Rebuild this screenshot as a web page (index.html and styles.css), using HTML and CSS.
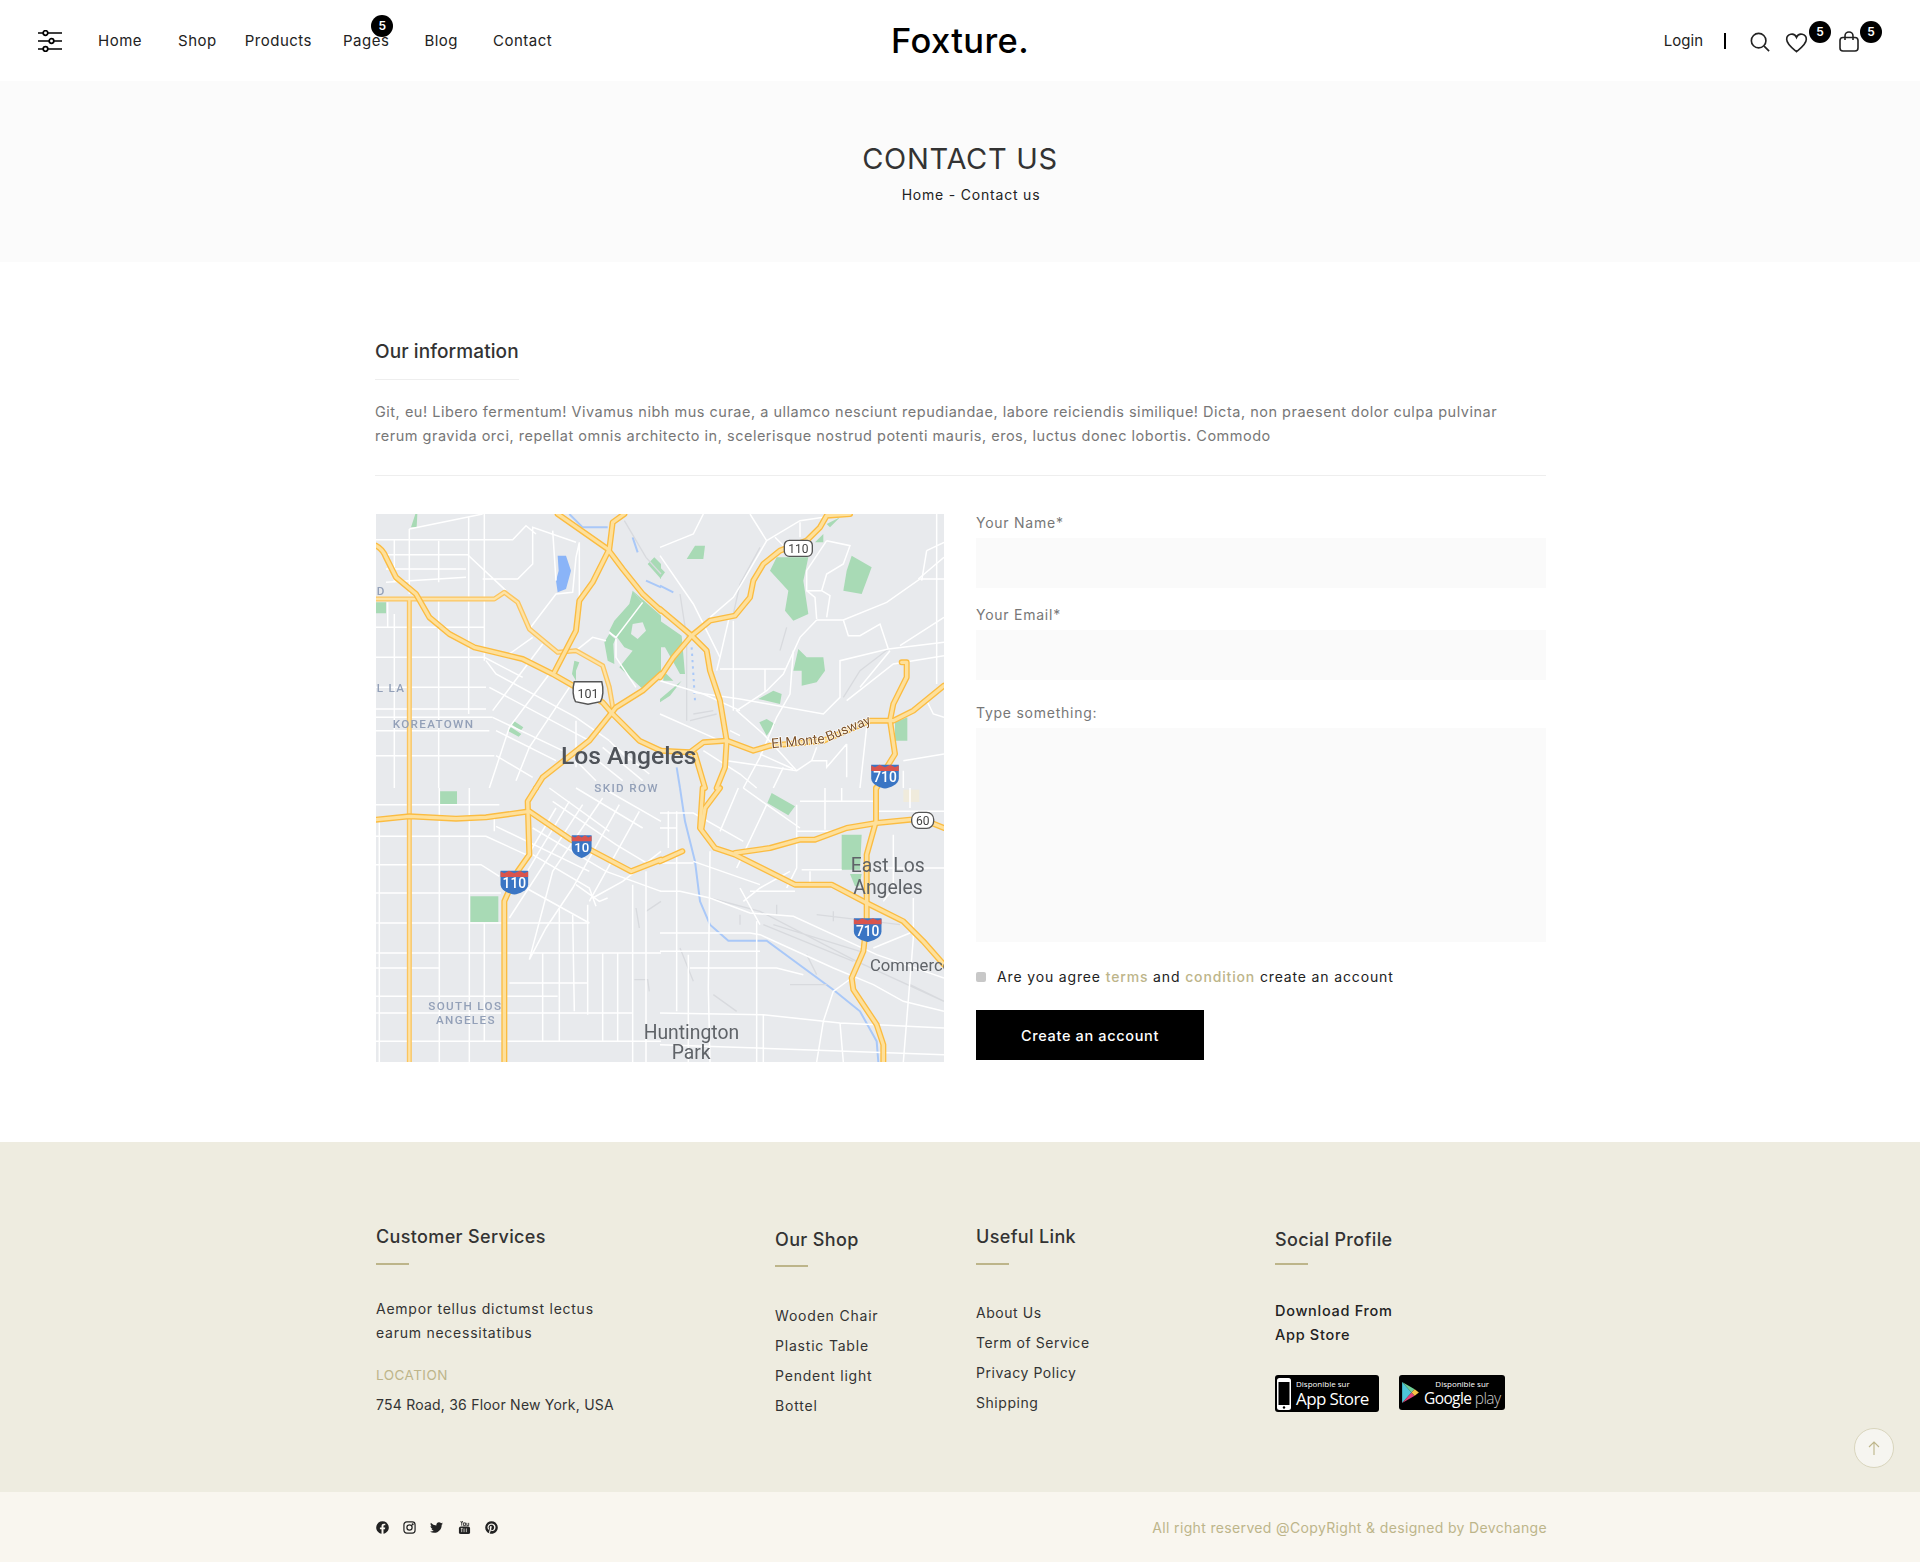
FILE: index.html
```html
<!DOCTYPE html>
<html lang="en">
<head>
    <meta charset="UTF-8">
    <meta name="viewport" content="width=device-width, initial-scale=1.0">
    <title>Foxture - Contact us</title>
    <link rel="stylesheet" href="styles.css">
</head>
<body>
    <header class="site-header">
        <div class="header-left">
            <svg class="menu-icon" viewBox="0 0 24 22" width="24" height="22" fill="none" stroke="#000" stroke-width="1.7">
                <path d="M0 3h5M10 3h14M0 11h11M16 11h8M0 19h5M10 19h14"/>
                <circle cx="7.5" cy="3" r="2.3"/><circle cx="13.5" cy="11" r="2.3"/><circle cx="7.5" cy="19" r="2.3"/>
            </svg>
            <nav class="main-nav">
                <a href="#" class="nav-home">Home</a>
                <a href="#" class="nav-shop">Shop</a>
                <a href="#" class="nav-products">Products</a>
                <a href="#" class="nav-pages">Pages<span class="badge">5</span></a>
                <a href="#" class="nav-blog">Blog</a>
                <a href="#" class="nav-contact">Contact</a>
            </nav>
        </div>
        <div class="logo">Foxture.</div>
        <div class="header-right">
            <a href="#" class="login">Login</a>
            <span class="divider"></span>
            <svg class="icon-search" viewBox="0 0 22 22" width="20" height="20" fill="none" stroke="#222" stroke-width="1.8">
                <circle cx="9.5" cy="9.5" r="8"/><path d="M15.5 15.5L21 21"/>
            </svg>
            <span class="icon-wrap icon-heart">
                <svg viewBox="0 0 24 22" width="23" height="20" fill="none" stroke="#222" stroke-width="1.8">
                    <path d="M12 20.5C7 16.5 1.2 12.5 1.2 7A5.6 5.6 0 0 1 12 4.8 5.6 5.6 0 0 1 22.8 7c0 5.5-5.8 9.5-10.8 13.5z"/>
                </svg>
                <span class="badge">5</span>
            </span>
            <span class="icon-wrap icon-bag">
                <svg viewBox="0 0 20 21" width="20" height="21" fill="none" stroke="#222" stroke-width="1.6">
                    <rect x="1" y="6.5" width="18" height="13.5" rx="3"/><path d="M6 9V5a4 4 0 0 1 8 0v4"/>
                </svg>
                <span class="badge">5</span>
            </span>
        </div>
    </header>

    <section class="page-title">
        <h1>CONTACT US</h1>
        <div class="crumbs">Home - Contact us</div>
    </section>

    <main class="contact">
        <h2 class="info-title">Our information</h2>
        <p class="info-text">Git, eu! Libero fermentum! Vivamus nibh mus curae, a ullamco nesciunt repudiandae, labore reiciendis similique! Dicta, non praesent dolor culpa pulvinar<br>rerum gravida orci, repellat omnis architecto in, scelerisque nostrud potenti mauris, eros, luctus donec lobortis. Commodo</p>
        <div class="contact-grid">
            <svg class="map" viewBox="0 0 1704 1644">
                <defs>
                    <g id="freeways" fill="none" stroke-linejoin="round" stroke-linecap="round">
                        <!-- north west -->
                        <path d="M0 95Q20 105 30 130L60 190L120 240L160 310L220 360L295 400L440 435L530 480L600 520L680 565L710 600L790 680L855 710"/>
                        <path d="M545 0L695 105L740 165L800 240L855 290"/>
                        <path d="M745 0L710 25L700 105L650 205L610 260L600 350L535 475"/>
                        <path d="M855 480L800 530L720 580L640 680L500 790L480 822"/>
                        <g transform="translate(852 0)">
                            <path d="M0 285L95 365L140 410L150 470L180 560L200 680L195 760L170 822"/>
                            <path d="M570 0L500 5L480 40L440 80L360 110L310 150L280 200L270 250L225 305L150 320L95 365L40 430L0 490"/>
                            <path d="M0 710L90 715L130 685L200 680L280 710L330 695L490 680L630 620H700L760 590L852 515"/>
                            <path d="M105 720L135 822"/>
                            <path d="M725 445L740 445L740 490L700 570L690 620L705 720L680 760L650 822"/>
                        </g>
                        <g transform="translate(0 822)">
                            <path d="M0 95L100 85L240 92L330 88L460 70L585 155L765 250L855 215"/>
                            <path d="M480 0L455 40L460 200L425 250L385 340V822"/>
                        </g>
                        <g transform="translate(852 822)">
                            <path d="M128 0L120 120L165 180L225 200L405 290H515L620 345L730 400L790 460L852 530"/>
                            <path d="M180 0L135 60L125 120"/>
                            <path d="M225 195L330 180L420 155H465L560 120L650 105L750 95H790L852 120"/>
                            <path d="M648 0V100L620 200V400L610 490L575 570L580 605L650 710L670 770V822"/>
                            <path d="M0 220L67 190"/>
                        </g>
                    </g>
                    <g id="surface" fill="none" stroke-linejoin="round">
                        <path d="M0 255H355L385 235L425 265L460 345L545 415L600 410L680 455L700 520L712 590"/>
                        <path d="M100 255V1644"/>
                    </g>
                    <path id="busway" d="M1187 703L1342 688L1492 626"/>
                </defs>
                <rect width="1704" height="1644" fill="#e8eaed"/>

                <!-- parks -->
                <g fill="#a8dab5">
                    <path d="M770 230L798 265L720 365L745 400L770 410L730 460L800 525L855 480V305z"/>
                    <path d="M770 230L760 270L715 320L700 350L718 370L798 265z"/>
                    <path d="M700 360L685 385L695 440L715 450L712 390L718 375z"/>
                    <path d="M595 440L610 445L600 470L600 500L588 480z"/>
                    <path d="M405 630L415 622L442 640L434 650zM395 650L405 640L436 660L428 668z"/>
                    <path d="M0 265H30V298H0zM105 40L118 0H124L122 40zM815 150L835 130L855 150V195z"/>
                    <g transform="translate(852 0)">
                        <path d="M330 170L350 130H445L430 200L445 300L400 320L375 290L385 230z"/>
                        <path d="M575 125L635 160L620 200L605 240L550 230L560 170z"/>
                        <path d="M400 470L415 405L440 430L490 430L495 470L470 505L425 515V470z"/>
                        <path d="M295 555L340 530L365 540L360 570zM298 625L320 615L345 630L320 665z"/>
                        <path d="M105 95H135L130 135H80zM705 625L742 610V680H705zM0 160L15 175L0 195z"/>
                        <path d="M0 320L65 365L75 480L60 480L15 400H0zM10 470L40 500H10zM0 555L65 500L30 545L0 565z"/>
                        <path d="M500 30L540 10L510 40zM465 85L490 60V85z"/>
                    </g>
                    <g transform="translate(0 822)">
                        <path d="M190 10H243V48H190zM283 325H367V402H283z"/>
                    </g>
                    <g transform="translate(852 822)">
                        <path d="M335 15L405 55L385 82L322 45zM545 140H605L600 245H545zM570 258H605L598 295H585z"/>
                    </g>
                </g>
                <path d="M770 330L800 325L810 350L785 375L765 360z" fill="#e8eaed"/>
                <path transform="translate(852 822)" d="M730 5H778V42H730z" fill="#f0ebdc"/>

                <!-- water -->
                <path d="M545 125L570 125L585 170L570 225L545 235L540 200L548 170z" fill="#8ab4f8"/>
                <g fill="none" stroke="#a9c8f8" stroke-width="6">
                    <path d="M580 0L620 40H695M770 70L785 115M810 200L855 220"/>
                    <path transform="translate(852 0)" d="M0 215L40 235"/>
                    <path transform="translate(852 0)" d="M95 400L105 560" stroke-dasharray="7 12"/>
                    <path transform="translate(852 0)" d="M50 760L60 822"/>
                    <path transform="translate(852 822)" d="M60 0L75 100L105 220L120 340L150 410L205 458H320L520 605L600 670L650 760L655 822"/>
                </g>

                <!-- gray rail lines -->
                <g fill="none" stroke="#d8dade" stroke-width="4">
                    <path d="M745 20L810 130L855 180M770 800L780 822"/>
                    <g transform="translate(852 0)">
                        <path d="M60 240L80 370V620M300 100L240 210L220 300M380 340L360 410M685 405L600 470L550 550M100 600L160 590M90 620L170 600"/>
                    </g>
                    <g transform="translate(0 822)">
                        <path d="M780 360L790 420M810 370L855 340M775 575H815L820 610"/>
                    </g>
                    <g transform="translate(852 822)">
                        <path d="M150 330L300 370L590 520L852 640M310 410L580 520M340 410L600 490M470 380L720 410M240 380V410M350 350V380M520 370V400M60 480L100 580M160 620L230 670M440 500L470 560M390 590H500M750 590L852 640"/>
                    </g>
                </g>

                <!-- streets -->
                <g fill="none" stroke="#fff" stroke-width="4.5">
                    <!-- north west -->
                    <path d="M100 45L320 0M0 77H410L450 35L480 60M30 122H275L390 230M30 165H270M30 205L270 190M320 195H425L470 150V40L600 85"/>
                    <path d="M0 340H325M0 430H325L440 490M0 520H330M0 585H330M0 610H350M0 650H340M0 725H355"/>
                    <path d="M55 75V205M100 45V240M188 80V205M188 260V822M278 10V600M325 0V440M35 265V340M55 300V822"/>
                    <path d="M330 440L360 480L600 610L700 680M340 520L640 680M350 610L560 710M360 650L540 740M360 725L470 790"/>
                    <path d="M470 370L400 420M500 390L350 590M520 480L400 640L340 822M580 520L460 700L420 800M460 345L540 240L590 235L600 130L610 85V260M530 50L540 200"/>
                    <path d="M690 380L650 370L600 410M800 265L720 370L700 355M720 375V430L780 520"/>
                    <path d="M600 620V760M700 680L760 740M640 720L740 800M680 700L800 800M720 700L820 780M600 740L660 800"/>
                    <!-- north east -->
                    <g transform="translate(852 0)">
                        <path d="M0 125L100 270L180 430M270 0L320 80L250 200L220 250L150 310M0 100L100 60L130 0M320 80L420 20L490 10M345 70L375 100M420 25V70"/>
                        <path d="M500 80L570 95L550 150L500 180L485 230L510 245L500 310M500 80L440 170V230L485 230M440 230L465 250L470 315"/>
                        <path d="M470 318H550L680 265L780 195H852M470 318L420 370L370 480L320 530L230 590L310 660L410 770"/>
                        <path d="M550 318L565 365H600L660 330L685 405L540 440V550L490 600L240 555L100 535M685 405L852 385M400 410L390 540L350 610L300 730L250 822"/>
                        <path d="M180 465H375M315 465V530M220 320V590M210 300L180 430L170 470M830 0V510M800 110L785 200M800 110L852 85"/>
                        <path d="M560 560L700 450L852 425M600 520L690 410M720 395L852 310M775 195L852 130M800 560L820 600L852 610M620 640L600 822"/>
                        <path d="M470 700L455 740H500V760L560 690M200 740L410 770L455 740M300 720L400 765M370 760L340 822M560 690V790M730 740L852 720M730 770V822"/>
                        <path d="M240 590L130 540L0 500M0 600L180 680M130 710L240 780L290 822M210 650L240 665"/>
                    </g>
                    <!-- south west -->
                    <g transform="translate(0 822)">
                        <path d="M0 50H370M0 145H330L450 200M0 230H315L370 265M0 315H375M0 405H640M0 495H855M0 540H190M0 625H545M0 675H770M0 760H855M400 585H635"/>
                        <path d="M10 90V822M190 0V822M280 0V822M325 405V760M355 90V130M500 495V760M550 360V760M590 380L595 670M635 350V680M680 495V760M725 495V760M770 290V822M810 250V822"/>
                        <path d="M360 115L640 250M470 120L690 250L855 310M470 200L640 300L660 355M450 300L640 405M600 290L670 340L695 330"/>
                        <path d="M540 60L410 280M580 40L430 290M620 50L400 390M680 30L530 250L460 515M730 50L590 300L510 420L460 515M790 70L640 340M855 190L740 280L650 330"/>
                        <path d="M520 0L700 130M600 0L800 120M680 0L855 100M530 40L720 170L820 230"/>
                    </g>
                    <!-- south east -->
                    <g transform="translate(852 822)">
                        <path d="M0 75H100L250 160M0 120H50M50 70V670M25 70V180M100 220L300 290M0 225H100M0 310H60L150 330L270 375L400 385L650 500L852 570"/>
                        <path d="M150 190L145 600L150 822M290 400V822M240 300L300 410M235 0L180 130M320 50L230 240M250 0L320 50L420 120M410 50V240L380 300"/>
                        <path d="M495 0V125M545 0V40M420 40H645M410 130H520M425 245H545M450 250V285M650 240H852M700 140V300L670 340M760 330V450L730 822"/>
                        <path d="M270 310H405M250 340L300 300L390 250M640 70H852M750 60V0M0 435H270L300 440L520 540L640 590L730 640L852 670M0 490H300M90 540H350L430 560M85 500V822"/>
                        <path d="M520 610L490 700L470 822M520 610L575 570M640 480L750 435M0 675L310 680L540 705L852 720M310 680V822M540 705L550 822M0 770L852 800"/>
                    </g>
                </g>

                <use href="#surface" stroke="#fbc55f" stroke-width="15"/>
                <use href="#surface" stroke="#fee3a6" stroke-width="7"/>
                <use href="#freeways" stroke="#fbbc41" stroke-width="18"/>
                <use href="#freeways" stroke="#fee09b" stroke-width="10"/>

                <!-- shields -->
                <g class="shield-i" transform="translate(1527 787) scale(1.15)"><path d="M-36-30H36V5C36 22 12 30 0 32-12 30-36 22-36 5z" fill="#3a75c4"/><path d="M-36-28L-26-24-14-30 0-24 14-30 26-24 36-28V-14H-36z" fill="#d9544d"/><text y="16" text-anchor="middle" font-size="36">710</text></g>
                <g class="shield-i" transform="translate(1475 1247) scale(1.15)"><path d="M-36-30H36V5C36 22 12 30 0 32-12 30-36 22-36 5z" fill="#3a75c4"/><path d="M-36-28L-26-24-14-30 0-24 14-30 26-24 36-28V-14H-36z" fill="#d9544d"/><text y="16" text-anchor="middle" font-size="36">710</text></g>
                <g class="shield-i" transform="translate(415 1105) scale(1.15)"><path d="M-36-30H36V5C36 22 12 30 0 32-12 30-36 22-36 5z" fill="#3a75c4"/><path d="M-36-28L-26-24-14-30 0-24 14-30 26-24 36-28V-14H-36z" fill="#d9544d"/><text y="16" text-anchor="middle" font-size="36">110</text></g>
                <g class="shield-i" transform="translate(617 997) scale(1.1)"><path d="M-27-30H27V5C27 20 10 28 0 32-10 28-27 20-27 5z" fill="#3a75c4"/><path d="M-27-28L-18-24-9-30 0-24 9-30 18-24 27-28V-14H-27z" fill="#d9544d"/><text y="16" text-anchor="middle" font-size="36">10</text></g>
                <g class="shield-us" transform="translate(636 538) scale(1.25)"><path d="M-33-28H33C38-10 36 10 30 20L0 26-30 20C-36 10-38-10-33-28z" fill="#fff" stroke="#555" stroke-width="3.5"/><text y="12" text-anchor="middle" font-size="30">101</text></g>
                <g class="shield-us" transform="translate(1267 103)"><rect x="-42" y="-24" width="84" height="48" rx="15" fill="#fff" stroke="#555" stroke-width="4"/><text y="13" text-anchor="middle" font-size="36">110</text></g>
                <g class="shield-us" transform="translate(1640 919)"><rect x="-33" y="-24" width="66" height="48" rx="21" fill="#fff" stroke="#555" stroke-width="4"/><text y="13" text-anchor="middle" font-size="36">60</text></g>

                <!-- labels -->
                <text class="map-city" x="555" y="750" font-size="74">Los Angeles</text>
                <text class="map-place" x="1424" y="1074" font-size="58">East Los</text>
                <text class="map-place" x="1432" y="1140" font-size="58">Angeles</text>
                <text class="map-place" x="1482" y="1370" font-size="50">Commerce</text>
                <text class="map-place" x="803" y="1574" font-size="58">Huntington</text>
                <text class="map-place" x="887" y="1634" font-size="58">Park</text>
                <text class="map-area" x="50" y="643" font-size="35">KOREATOWN</text>
                <text class="map-area" x="655" y="834" font-size="35">SKID ROW</text>
                <text class="map-area" x="157" y="1487" font-size="35">SOUTH LOS</text>
                <text class="map-area" x="180" y="1530" font-size="35">ANGELES</text>
                <text class="map-area" x="2" y="534" font-size="35">L LA</text>
                <text class="map-area" x="2" y="242" font-size="35">D</text>
                <text class="map-road" font-size="41"><textPath href="#busway">El Monte Busway</textPath></text>
            </svg>

            <form class="contact-form">
                <label for="name">Your Name*</label>
                <input type="text" id="name">
                <label for="email">Your Email*</label>
                <input type="text" id="email">
                <label for="msg" class="label-msg">Type something:</label>
                <textarea id="msg"></textarea>
                <div class="agree">
                    <span class="check"></span>
                    <span>Are you agree <a href="#">terms</a> and <a href="#">condition</a> create an account</span>
                </div>
                <button type="button">Create an account</button>
            </form>
        </div>
    </main>

    <footer class="site-footer">
        <div class="footer-cols">
            <div class="col col-service">
                <h3>Customer Services</h3>
                <p class="about">Aempor tellus dictumst lectus<br>earum necessitatibus</p>
                <div class="location">LOCATION</div>
                <p class="address">754 Road, 36 Floor New York, USA</p>
            </div>
            <div class="col col-shop">
                <h3>Our Shop</h3>
                <ul>
                    <li>Wooden Chair</li>
                    <li>Plastic Table</li>
                    <li>Pendent light</li>
                    <li>Bottel</li>
                </ul>
            </div>
            <div class="col col-links">
                <h3>Useful Link</h3>
                <ul>
                    <li>About Us</li>
                    <li>Term of Service</li>
                    <li>Privacy Policy</li>
                    <li>Shipping</li>
                </ul>
            </div>
            <div class="col col-social">
                <h3>Social Profile</h3>
                <div class="download">Download From<br>App Store</div>
                <div class="stores">
                    <div class="store store-apple">
                        <svg viewBox="0 0 14 32" width="14" height="32">
                            <rect x="0" y="0" width="14" height="32" rx="2.5" fill="#fff"/>
                            <rect x="1.5" y="4" width="11" height="23" fill="#000"/>
                            <circle cx="7" cy="29.5" r="1.2" fill="#000"/>
                        </svg>
                        <div class="store-text">
                            <small>Disponible sur</small>
                            <strong>App Store</strong>
                        </div>
                    </div>
                    <div class="store store-google">
                        <svg viewBox="0 0 16 20" width="17" height="21">
                            <path d="M0 0L9 10 0 20z" fill="#4cc7d9"/>
                            <path d="M0 0L12 7 9 10z" fill="#6fcf97"/>
                            <path d="M0 20L12 13 9 10z" fill="#e0457b"/>
                            <path d="M12 7L16 10 12 13 9 10z" fill="#f7c244"/>
                        </svg>
                        <div class="store-text">
                            <small>Disponible sur</small>
                            <strong>Google <i>play</i></strong>
                        </div>
                    </div>
                </div>
            </div>
        </div>
        <a href="#" class="to-top">
            <svg viewBox="0 0 12 14" width="12" height="14" fill="none" stroke="#bdb58a" stroke-width="1.1"><path d="M6 14V1M1 6l5-5 5 5"/></svg>
        </a>
    </footer>

    <div class="footer-bottom">
        <div class="footer-bottom-inner">
            <div class="socials">
                <svg class="solid" viewBox="0 0 512 512" width="13" height="13"><path d="M504 256C504 119 393 8 256 8S8 119 8 256c0 123.78 90.69 226.38 209.25 245V327.69h-63V256h63v-54.64c0-62.15 37-96.48 93.67-96.48 27.14 0 55.52 4.84 55.52 4.84v61h-31.28c-30.8 0-40.41 19.12-40.41 38.73V256h68.78l-11 71.69h-57.78V501C413.31 482.38 504 379.78 504 256z"/></svg>
                <svg viewBox="0 0 14 14" width="13" height="13" fill="none" stroke="#222" stroke-width="1.3"><rect x="1" y="1" width="12" height="12" rx="3"/><circle cx="7" cy="7" r="2.8"/><circle cx="10.4" cy="3.6" r=".5" fill="#222"/></svg>
                <svg class="solid" viewBox="0 0 512 512" width="13" height="13"><path d="M459.37 151.716c.325 4.548.325 9.097.325 13.645 0 138.72-105.583 298.558-298.558 298.558-59.452 0-114.68-17.219-161.137-47.106 8.447.974 16.568 1.299 25.34 1.299 49.055 0 94.213-16.568 130.274-44.832-46.132-.975-84.792-31.188-98.112-72.772 6.498.974 12.995 1.624 19.818 1.624 9.421 0 18.843-1.3 27.614-3.573-48.081-9.747-84.143-51.98-84.143-102.985v-1.299c13.969 7.797 30.214 12.67 47.431 13.319-28.264-18.843-46.781-51.005-46.781-87.391 0-19.492 5.197-37.36 14.294-52.954 51.655 63.675 129.3 105.258 216.365 109.807-1.624-7.797-2.599-15.918-2.599-24.04 0-57.828 46.782-104.934 104.934-104.934 30.213 0 57.502 12.67 76.67 33.137 23.715-4.548 46.456-13.32 66.599-25.34-7.798 24.366-24.366 44.833-46.132 57.827 21.117-2.273 41.584-8.122 60.426-16.243-14.292 20.791-32.161 39.308-52.628 54.253z"/></svg>
                <svg class="solid" viewBox="0 0 14 14" width="13" height="13"><path d="M3 0l1 2.5L5 0M4 2.5V5M6 2h2v3H6zM9.5 2v3h2V2" fill="none" stroke="#222" stroke-width=".9"/><rect x="1" y="6" width="12" height="8" rx="2"/><path d="M3 8h2M4 8v4M6.5 8v4M9 8v4" stroke="#f9f6ef" stroke-width=".8"/></svg>
                <svg class="solid" viewBox="0 0 496 512" width="13" height="13"><path d="M496 256c0 137-111 248-248 248-25.6 0-50.2-3.9-73.4-11.1 10.1-16.5 25.2-43.5 30.8-65 3-11.6 15.4-59 15.4-59 8.1 15.4 31.7 28.5 56.8 28.5 74.8 0 128.7-68.8 128.7-154.3 0-81.9-66.9-143.2-152.9-143.2-107 0-163.9 71.8-163.9 150.1 0 36.4 19.4 81.7 50.3 96.1 4.7 2.2 7.2 1.2 8.3-3.3.8-3.4 5-20.3 6.9-28.1.6-2.5.3-4.7-1.7-7.1-10.1-12.5-18.3-35.3-18.3-56.6 0-54.7 41.4-107.6 112-107.6 60.9 0 103.6 41.5 103.6 100.9 0 67.1-33.9 113.6-78 113.6-24.3 0-42.6-20.1-36.7-44.8 7-29.5 20.5-61.3 20.5-82.6 0-19-10.2-34.9-31.4-34.9-24.9 0-44.9 25.7-44.9 60.2 0 22 7.4 36.8 7.4 36.8s-24.5 103.8-29 123.2c-5 21.4-3 51.6-.9 71.2C65.4 450.9 0 361.1 0 256 0 119 111 8 248 8s248 111 248 248z"/></svg>
            </div>
            <div class="copyright">All right reserved @CopyRight &amp; designed by Devchange</div>
        </div>
    </div>
</body>
</html>
```
FILE: styles.css
```css
* {
    box-sizing: border-box;
}
body {
    font-family: Inter, "Open Sans", sans-serif;
    font-size: 14px;
    margin: 0;
    padding: 0;
    background-color: white;
    color: #222;
}
a {
    color: inherit;
    text-decoration: none;
}

/* header */
.site-header {
    height: 81px;
    display: grid;
    grid-template-columns: 1fr auto 1fr;
    align-items: center;
    padding: 0 38px;
}
.header-left {
    display: flex;
    align-items: center;
}
.menu-icon {
    margin-right: 36px;
}
.main-nav {
    display: flex;
    font-size: 15px;
    letter-spacing: .5px;
}
.nav-home { margin-right: 36px; }
.nav-shop { margin-right: 28px; }
.nav-products { margin-right: 31px; }
.nav-pages { margin-right: 35px; position: relative; }
.nav-blog { margin-right: 35px; }
.badge {
    position: absolute;
    width: 22px;
    height: 22px;
    border-radius: 50%;
    background-color: #000;
    color: white;
    font-size: 12px;
    font-weight: 600;
    line-height: 22px;
    text-align: center;
    letter-spacing: 0;
}
.nav-pages .badge {
    top: -16px;
    right: -4px;
}
.logo {
    font-size: 34.5px;
    font-weight: 500;
    color: #000;
    line-height: 1;
    letter-spacing: .4px;
    padding-top: 2px;
}
.header-right {
    display: flex;
    align-items: center;
    justify-content: flex-end;
    font-size: 15px;
}
.login {
    margin-right: 21px;
}
.divider {
    width: 2px;
    height: 16px;
    background-color: #000;
    margin-right: 24px;
}
.icon-search {
    margin-top: 2px;
    margin-right: 15px;
}
.icon-wrap {
    position: relative;
    display: flex;
}
.icon-heart {
    margin-top: 5px;
    margin-right: 31px;
}
.icon-bag {
    margin-top: 2px;
    margin-right: 23px;
}
.icon-heart .badge {
    top: -12px;
    right: -23px;
}
.icon-bag .badge {
    top: -10px;
    right: -23px;
}

/* page title */
.page-title {
    height: 181px;
    background-color: #fbfbfb;
    text-align: center;
    padding-top: 60px;
}
.page-title h1 {
    font-size: 29px;
    font-weight: 400;
    color: #333;
    line-height: 36px;
    margin: 0;
    letter-spacing: .7px;
}
.crumbs {
    font-size: 14px;
    letter-spacing: .8px;
    margin-top: 9px;
    padding-left: 22px;
}

/* contact */
.contact {
    width: 1171px;
    margin-left: 375px;
    padding-top: 77px;
    height: 880px;
}
.info-title {
    display: inline-block;
    font-size: 19px;
    font-weight: 500;
    color: #333;
    line-height: 26px;
    letter-spacing: .1px;
    margin: 0;
    padding-bottom: 14px;
    border-bottom: 1px solid #eee;
}
.info-text {
    color: #777;
    font-size: 14.5px;
    letter-spacing: .51px;
    line-height: 24px;
    margin: 20px 0 0;
    padding-bottom: 27px;
    border-bottom: 1px solid #eee;
    white-space: nowrap;
}
.contact-grid {
    display: grid;
    grid-template-columns: 569px 1fr;
    gap: 32px;
    margin-top: 38px;
}
.map {
    display: block;
    width: 568px;
    height: 548px;
    margin-left: 1px;
    filter: blur(.3px);
}
.map text {
    font-family: Roboto, sans-serif;
    letter-spacing: 0;
}
.map .map-city { fill: #4f5359; font-weight: 500; }
.map .map-place { fill: #5f6368; }
.map .map-area { fill: #93a0b8; font-weight: 500; letter-spacing: 4px; }
.map .map-road {
    fill: #7d5228;
    stroke: #fff;
    stroke-width: 4px;
    paint-order: stroke;
}
.shield-i text { fill: white; font-weight: 500; }
.shield-us text { fill: #444; }
.contact-form {
    display: flex;
    flex-direction: column;
}
.contact-form label {
    color: #777;
    font-size: 14px;
    letter-spacing: .75px;
    line-height: 18px;
    margin-bottom: 6px;
}
.contact-form input {
    height: 50px;
    background-color: #fafafa;
    border: none;
    margin-bottom: 18px;
}
.contact-form .label-msg {
    margin-top: 6px;
    margin-bottom: 6px;
}
.contact-form textarea {
    height: 214px;
    background-color: #fafafa;
    border: none;
    resize: none;
}
.agree {
    display: flex;
    align-items: center;
    gap: 11px;
    font-size: 14px;
    letter-spacing: .85px;
    margin-top: 26px;
    line-height: 18px;
}
.agree a {
    color: #bdb58a;
    font-weight: 500;
}
.check {
    width: 10px;
    height: 10px;
    background-color: #c8c8c8;
    border-radius: 2px;
}
.contact-form button {
    width: 228px;
    height: 50px;
    margin-top: 24px;
    background-color: #000;
    color: white;
    border: none;
    font-family: inherit;
    font-size: 14.5px;
    font-weight: 500;
    letter-spacing: .65px;
}

/* footer */
.site-footer {
    position: relative;
    height: 350px;
    background-color: #eeece0;
}
.footer-cols {
    width: 1170px;
    margin-left: 376px;
    display: grid;
    grid-template-columns: 399px 201px 299px 1fr;
}
.col h3 {
    font-size: 18px;
    font-weight: 500;
    color: #333;
    line-height: 24px;
    letter-spacing: .35px;
    margin: 0;
    padding-bottom: 16px;
    position: relative;
}
.col h3::after {
    content: "";
    position: absolute;
    left: 0;
    bottom: 0;
    width: 33px;
    height: 2px;
    background-color: #bdb58a;
}
.col-service, .col-links {
    padding-top: 83px;
}
.col-shop, .col-social {
    padding-top: 86px;
}
.col-shop h3 {
    padding-bottom: 15px;
}
.col-social h3 {
    padding-bottom: 13px;
}
.col p {
    font-size: 14px;
    line-height: 24px;
    margin: 0;
    color: #333;
}
.col .about {
    margin-top: 32px;
    letter-spacing: .75px;
}
.col .address {
    letter-spacing: .22px;
}
.location {
    color: #bdb58a;
    font-size: 13.5px;
    letter-spacing: .45px;
    line-height: 18px;
    margin: 21px 0 9px;
}
.col ul {
    list-style: none;
    margin: 0;
    padding: 0;
    font-size: 14px;
    color: #333;
}
.col li {
    height: 30px;
    line-height: 30px;
}
.col-shop ul {
    margin-top: 34px;
    letter-spacing: .8px;
}
.col-links ul {
    margin-top: 33px;
    letter-spacing: .55px;
}
.download {
    font-weight: 500;
    font-size: 14.5px;
    letter-spacing: .7px;
    line-height: 24px;
    margin-top: 34px;
}
.stores {
    display: flex;
    gap: 20px;
    margin-top: 28px;
}
.store {
    display: flex;
    align-items: center;
    height: 37px;
    background-color: #000;
    color: white;
    border-radius: 3px;
    gap: 5px;
    line-height: 1;
}
.store-apple {
    width: 104px;
    padding-left: 2px;
}
.store-google {
    width: 106px;
    height: 35px;
    padding-left: 3px;
}
.store-text {
    display: flex;
    flex-direction: column;
    white-space: nowrap;
    gap: 1px;
}
.store small {
    font-family: "Open Sans", sans-serif;
    font-size: 8px;
    line-height: 9px;
}
.store strong {
    font-family: "Open Sans", sans-serif;
    font-size: 17px;
    line-height: 19px;
    font-weight: 500;
    letter-spacing: -.6px;
}
.store-google .store-text {
    align-items: center;
}
.store-google strong {
    font-size: 15.5px;
    line-height: 18px;
    font-weight: 400;
}
.store-google i {
    font-style: normal;
    font-weight: 300;
    color: #ccc;
}
.to-top {
    position: absolute;
    top: 286px;
    right: 26px;
    width: 40px;
    height: 40px;
    border-radius: 50%;
    background-color: #f6f5f0;
    border: 1px solid #d9d5bd;
    display: flex;
    align-items: center;
    justify-content: center;
}

/* bottom bar */
.footer-bottom {
    height: 70px;
    background-color: #f9f6ef;
}
.footer-bottom-inner {
    width: 1171px;
    height: 70px;
    margin-left: 376px;
    display: flex;
    align-items: center;
    justify-content: space-between;
}
.socials {
    display: flex;
    gap: 14.2px;
}
.socials .solid {
    fill: #222;
}
.copyright {
    color: #bdb58a;
    font-size: 14px;
    letter-spacing: .35px;
}
```
